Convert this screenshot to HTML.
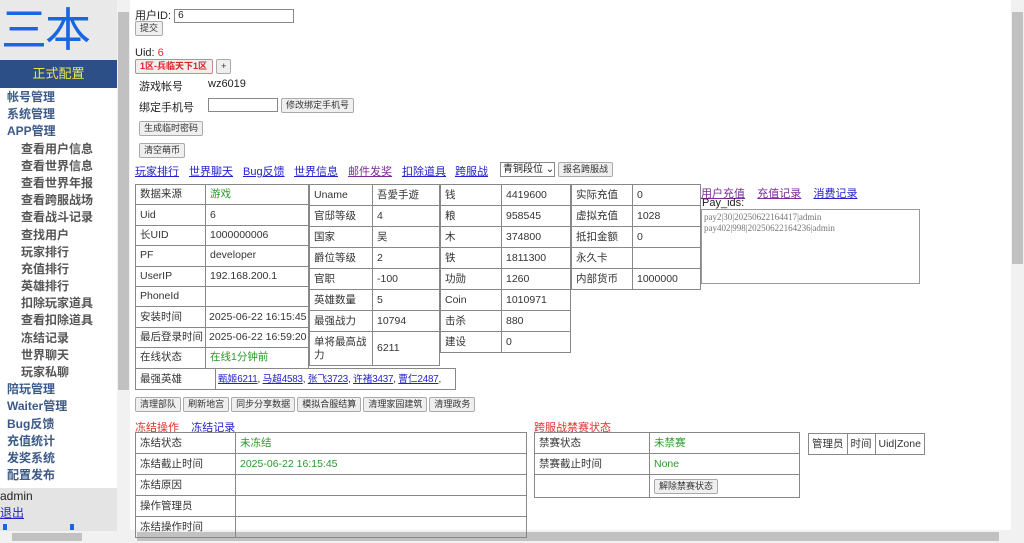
<!DOCTYPE html>
<html><head><meta charset="utf-8"><style>
*{box-sizing:border-box;margin:0;padding:0}
body{width:1024px;height:543px;overflow:hidden;position:relative;background:#fff;font-family:"Liberation Sans","Noto Sans CJK SC",sans-serif;font-size:11px;color:#222}
.a{position:absolute;white-space:nowrap}
.side{left:0;top:0;width:117px;height:543px;background:#fff}
.logo{left:0;top:0;width:117px;height:60px;background:#e9e9e9;color:#1a66e0;font-size:46px;line-height:60px;text-align:left;padding-left:1px;letter-spacing:-2px}
.cfg{left:0;top:60px;width:117px;height:28px;background:#2d4f87;color:#e8e84a;font-size:13px;text-align:center;line-height:28px}
.menu div{height:17.2px;line-height:17px;font-weight:bold;font-size:12px;color:#3d5a87}
.menu .s{padding-left:21px;color:#555}
.menu .t{padding-left:7px}
.btm{left:0;top:488px;width:117px;height:55px;background:#e4e4e4}
.sb{background:#f1f1f1}
.th{background:#c1c1c1}
.btn{display:inline-block;border:1px solid #aaa;background:#efefef;border-radius:2px;font-size:9px;padding:0 4px;height:15px;line-height:13px;color:#333}
a{color:#2222cc;text-decoration:underline}
a.v{color:#7a2a9a}
table{border-collapse:collapse;position:absolute;table-layout:fixed}
td{border:1px solid #888;padding:0 4px;font-size:10.5px;height:21px;line-height:13px;color:#333;white-space:nowrap;overflow:hidden}
.t1 td{height:20.4px}
.g{color:#2a9a2a}
.r{color:#e03030}
</style></head><body>
<div class="a side"></div>
<div class="a logo">三本</div>
<div class="a cfg">正式配置</div>
<div class="a menu" style="left:0;top:89px;width:117px">
<div class="t">帐号管理</div><div class="t">系统管理</div><div class="t">APP管理</div>
<div class="s">查看用户信息</div><div class="s">查看世界信息</div><div class="s">查看世界年报</div><div class="s">查看跨服战场</div><div class="s">查看战斗记录</div><div class="s">查找用户</div><div class="s">玩家排行</div><div class="s">充值排行</div><div class="s">英雄排行</div><div class="s">扣除玩家道具</div><div class="s">查看扣除道具</div><div class="s">冻结记录</div><div class="s">世界聊天</div><div class="s">玩家私聊</div>
<div class="t">陪玩管理</div><div class="t">Waiter管理</div><div class="t">Bug反馈</div><div class="t">充值统计</div><div class="t">发奖系统</div><div class="t">配置发布</div>
</div>
<div class="a btm"></div>
<div class="a" style="left:0;top:489px;font-size:12px;color:#222">admin</div>
<div class="a" style="left:0;top:504px;font-size:12px"><a>退出</a></div>
<div class="a" style="left:3px;top:524px;width:4px;height:6px;background:#1a66e0"></div>
<div class="a" style="left:70px;top:524px;width:4px;height:6px;background:#1a66e0"></div>
<div class="a sb" style="left:0;top:531px;width:117px;height:12px"></div>
<div class="a th" style="left:12px;top:533px;width:70px;height:8px"></div>
<div class="a sb" style="left:117px;top:0;width:13px;height:543px"></div>
<div class="a th" style="left:118px;top:12px;width:11px;height:378px"></div>
<div class="a sb" style="left:1011px;top:0;width:13px;height:543px"></div>
<div class="a th" style="left:1012px;top:12px;width:11px;height:252px"></div>
<div class="a sb" style="left:130px;top:530px;width:881px;height:13px"></div>
<div class="a th" style="left:137px;top:532px;width:862px;height:9px"></div>

<div class="a" style="left:135px;top:7px">用户ID: <span style="display:inline-block;width:120px;height:14px;border:1px solid #888;vertical-align:middle;padding-left:3px;font-size:10px;line-height:12px">6</span></div>
<div class="a" style="left:135px;top:21px"><span class="btn">提交</span></div>
<div class="a" style="left:135px;top:47px">Uid: <span class="r">6</span></div>
<div class="a" style="left:135px;top:59px"><span class="btn" style="color:#e02020;font-weight:bold;border-color:#c88;width:78px">1区-兵临天下1区</span> <span class="btn">+</span></div>
<div class="a" style="left:139px;top:78px">游戏帐号</div>
<div class="a" style="left:208px;top:78px">wz6019</div>
<div class="a" style="left:139px;top:99px">绑定手机号</div>
<div class="a" style="left:208px;top:98px;width:70px;height:14px;border:1px solid #888"></div>
<div class="a" style="left:281px;top:98px"><span class="btn">修改绑定手机号</span></div>
<div class="a" style="left:139px;top:121px"><span class="btn">生成临时密码</span></div>
<div class="a" style="left:139px;top:143px"><span class="btn">清空萌币</span></div>
<div class="a" style="left:135px;top:163px"><a>玩家排行</a></div>
<div class="a" style="left:189px;top:163px"><a>世界聊天</a></div>
<div class="a" style="left:243px;top:163px"><a>Bug反馈</a></div>
<div class="a" style="left:294px;top:163px"><a>世界信息</a></div>
<div class="a" style="left:348px;top:163px"><a class="v">邮件发奖</a></div>
<div class="a" style="left:402px;top:163px"><a>扣除道具</a></div>
<div class="a" style="left:455px;top:163px"><a>跨服战</a></div>
<div class="a" style="left:500px;top:162px;width:55px;height:15px;border:1px solid #888;font-size:10px;line-height:13px;padding-left:2px">青铜段位 ⌄</div>
<div class="a" style="left:558px;top:162px"><span class="btn">报名跨服战</span></div>

<table class="t1" style="left:135px;top:184px;width:174px">
<colgroup><col style="width:70px"><col></colgroup>
<tr><td>数据来源</td><td class="g">游戏</td></tr>
<tr><td>Uid</td><td>6</td></tr><tr><td>长UID</td><td>1000000006</td></tr>
<tr><td>PF</td><td>developer</td></tr><tr><td>UserIP</td><td>192.168.200.1</td></tr>
<tr><td>PhoneId</td><td></td></tr><tr><td>安装时间</td><td style="padding:0 3px">2025-06-22 16:15:45</td></tr>
<tr><td>最后登录时间</td><td style="padding:0 3px">2025-06-22 16:59:20</td></tr><tr><td>在线状态</td><td class="g">在线1分钟前</td></tr>
</table>
<table style="left:309px;top:184px;width:131px">
<colgroup><col style="width:63px"><col></colgroup>
<tr><td>Uname</td><td>吾愛手遊</td></tr><tr><td>官邸等级</td><td>4</td></tr>
<tr><td>国家</td><td>吴</td></tr><tr><td>爵位等级</td><td>2</td></tr><tr><td>官职</td><td>-100</td></tr>
<tr><td>英雄数量</td><td>5</td></tr><tr><td>最强战力</td><td>10794</td></tr>
<tr><td style="height:34px;white-space:normal">单将最高战力</td><td>6211</td></tr>
</table>
<table style="left:440px;top:184px;width:131px">
<colgroup><col style="width:61px"><col></colgroup>
<tr><td>钱</td><td>4419600</td></tr><tr><td>粮</td><td>958545</td></tr>
<tr><td>木</td><td>374800</td></tr><tr><td>铁</td><td>1811300</td></tr><tr><td>功勋</td><td>1260</td></tr>
<tr><td>Coin</td><td>1010971</td></tr><tr><td>击杀</td><td>880</td></tr><tr><td>建设</td><td>0</td></tr>
</table>
<table style="left:571px;top:184px;width:130px">
<colgroup><col style="width:61px"><col></colgroup>
<tr><td>实际充值</td><td>0</td></tr><tr><td>虚拟充值</td><td>1028</td></tr>
<tr><td>抵扣金额</td><td>0</td></tr><tr><td>永久卡</td><td></td></tr><tr><td>内部货币</td><td>1000000</td></tr>
</table>
<table style="left:135px;top:368px;width:321px">
<colgroup><col style="width:80px"><col></colgroup>
<tr><td>最强英雄</td><td style="padding:0 2px;font-size:9.8px;letter-spacing:-0.2px"><a>甄姬6211</a>, <a>马超4583</a>, <a>张飞3723</a>, <a>许褚3437</a>, <a>曹仁2487</a>,</td></tr>
</table>
<div class="a" style="left:701px;top:185px"><a class="v">用户充值</a>&nbsp;&nbsp;&nbsp; <a class="v">充值记录</a>&nbsp;&nbsp;&nbsp; <a>消费记录</a></div>
<div class="a" style="left:702px;top:197px">Pay_ids:</div>
<div class="a" style="left:701px;top:209px;width:219px;height:75px;border:1px solid #999;font-family:'Liberation Serif',serif;font-size:9px;color:#777;padding:2px;line-height:11px">pay2|30|20250622164417|admin<br>pay402|998|20250622164236|admin</div>

<div class="a" style="left:135px;top:397px;word-spacing:-1px"><span class="btn">清理部队</span> <span class="btn">刷新地宫</span> <span class="btn">同步分享数据</span> <span class="btn">模拟合服结算</span> <span class="btn">清理家园建筑</span> <span class="btn">清理政务</span></div>
<div class="a" style="left:135px;top:419px"><span class="r">冻结操作</span>&nbsp;&nbsp;&nbsp; <a>冻结记录</a></div>
<table style="left:135px;top:432px;width:392px">
<colgroup><col style="width:100px"><col></colgroup>
<tr><td>冻结状态</td><td class="g">未冻结</td></tr>
<tr><td>冻结截止时间</td><td class="g">2025-06-22 16:15:45</td></tr>
<tr><td>冻结原因</td><td></td></tr><tr><td>操作管理员</td><td></td></tr><tr><td>冻结操作时间</td><td></td></tr>
</table>
<div class="a r" style="left:534px;top:419px">跨服战禁赛状态</div>
<table style="left:534px;top:432px;width:266px">
<colgroup><col style="width:115px"><col></colgroup>
<tr><td>禁赛状态</td><td class="g">未禁赛</td></tr>
<tr><td>禁赛截止时间</td><td class="g">None</td></tr>
<tr><td style="height:23px"></td><td><span class="btn">解除禁赛状态</span></td></tr>
</table>
<table style="left:808px;top:433px;width:114px;table-layout:auto">
<tr><td style="padding:0 3px">管理员</td><td style="padding:0 3px">时间</td><td style="padding:0 3px">Uid|Zone</td></tr>
</table>
</body></html>
